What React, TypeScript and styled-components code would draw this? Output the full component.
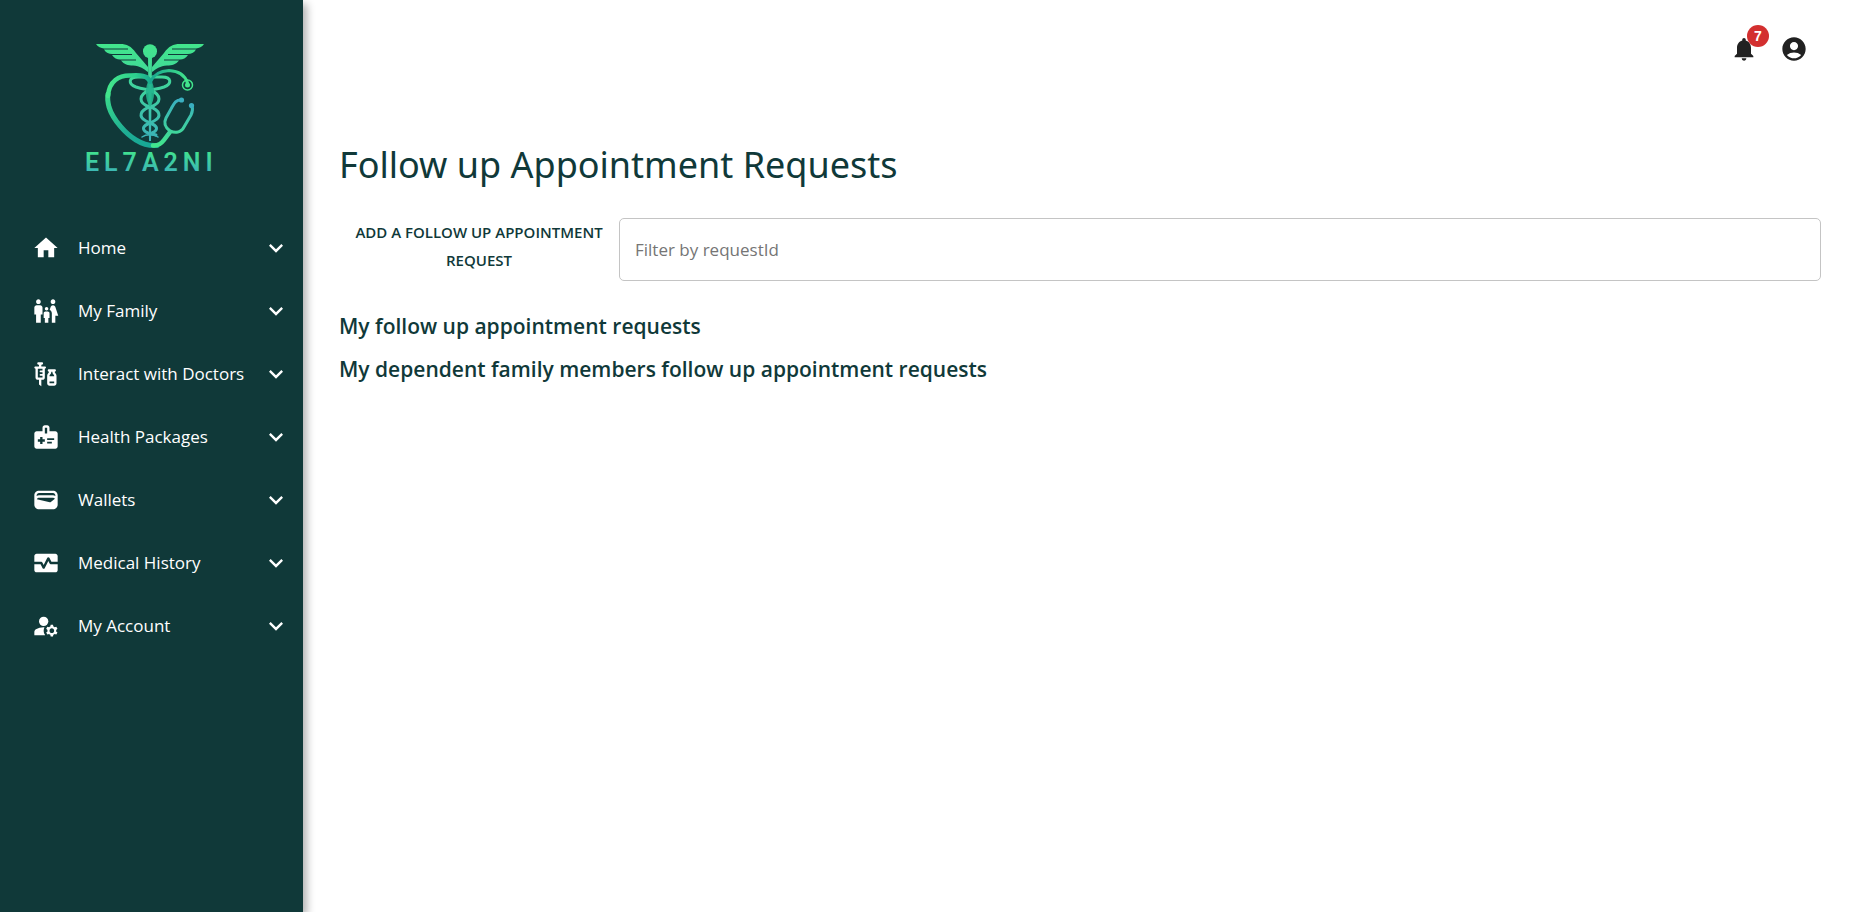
import React from 'react';
import styled, { createGlobalStyle } from 'styled-components';
import {
  MdHome,
  MdFamilyRestroom,
  MdVaccines,
  MdMedicalInformation,
  MdWallet,
  MdMonitorHeart,
  MdManageAccounts,
  MdExpandMore,
  MdNotifications,
  MdAccountCircle,
} from 'react-icons/md';
import type { IconType } from 'react-icons';

const GlobalStyle = createGlobalStyle`
  *, *::before, *::after { box-sizing: border-box; }
  body {
    margin: 0;
    background: #fff;
    color: #103939;
    font-family: "Segoe UI", "Open Sans", "Noto Sans", sans-serif;
  }
`;

const Page = styled.div`
  display: flex;
  min-height: 100vh;
`;

const Sidebar = styled.aside`
  flex: none;
  width: 303px;
  padding-top: 30px;
  background: #103939;
  box-shadow: 4px 4px 8px rgba(0, 0, 0, 0.3);
`;

const LogoLink = styled.a`
  display: flex;
  justify-content: center;
  margin-bottom: 26px;
  padding-right: 4px;
`;

const LogoText = styled.text`
  font-family: Roboto, sans-serif;
  font-size: 25px;
  font-weight: 600;
  letter-spacing: 5px;
`;

const Menu = styled.ul`
  margin: 0;
  padding: 0;
  list-style: none;
`;

const MenuButton = styled.button`
  display: flex;
  align-items: center;
  width: 100%;
  height: 63px;
  padding: 0 13px 0 32px;
  border: 0;
  background: none;
  color: #fff;
  font-family: inherit;
  font-size: 17px;
  text-align: left;
  cursor: pointer;

  svg { flex: none; }
`;

const MenuLabel = styled.span`
  flex: 1;
  margin-left: 18px;
  white-space: nowrap;
`;

const Main = styled.main`
  flex: 1;
  min-width: 0;
  padding: 0 30px 0 36px;
`;

const TopBar = styled.header`
  display: flex;
  justify-content: flex-end;
  gap: 22px;
  height: 100px;
  padding: 35px 13px 0 0;
`;

const IconButton = styled.button`
  position: relative;
  width: 28px;
  height: 28px;
  padding: 0;
  border: 0;
  background: none;
  color: #212121;
  cursor: pointer;

  svg { display: block; }
`;

const Badge = styled.span`
  position: absolute;
  top: -10px;
  right: -11px;
  width: 22px;
  height: 22px;
  border-radius: 50%;
  background: #d32f2f;
  color: #fff;
  font-size: 14px;
  font-weight: 600;
  line-height: 22px;
  text-align: center;
`;

const Title = styled.h1`
  margin: 40px 0 28px;
  font-family: "Segoe UI", "Noto Sans", sans-serif;
  font-size: 36px;
  font-weight: 400;
  line-height: 50px;
`;

const Toolbar = styled.div`
  display: flex;
  align-items: flex-start;
  margin-bottom: 28px;
`;

const AddButton = styled.button`
  flex: none;
  width: 280px;
  padding: 0 8px;
  border: 0;
  background: none;
  color: #103939;
  font-family: inherit;
  font-size: 15px;
  font-weight: 600;
  line-height: 28px;
  text-transform: uppercase;
  cursor: pointer;
`;

const FilterInput = styled.input`
  flex: 1;
  min-width: 0;
  height: 63px;
  padding: 0 15px;
  border: 1px solid #c4c4c4;
  border-radius: 5px;
  background: #fff;
  color: #103939;
  font-family: inherit;
  font-size: 17px;

  &::placeholder { color: #757575; opacity: 1; }
`;

const SectionTitle = styled.h2`
  margin: 0 0 9px;
  font-size: 21px;
  font-weight: 600;
  line-height: 34px;
`;

const menu: { label: string; icon: IconType }[] = [
  { label: 'Home', icon: MdHome },
  { label: 'My Family', icon: MdFamilyRestroom },
  { label: 'Interact with Doctors', icon: MdVaccines },
  { label: 'Health Packages', icon: MdMedicalInformation },
  { label: 'Wallets', icon: MdWallet },
  { label: 'Medical History', icon: MdMonitorHeart },
  { label: 'My Account', icon: MdManageAccounts },
];

function Logo() {
  return (
    <svg width="160" height="160" viewBox="0 0 160 160" fill="none" strokeLinecap="round" role="img" aria-label="El7a2ni">
      <defs>
        <linearGradient id="staff" gradientUnits="userSpaceOnUse" x1="0" y1="14" x2="0" y2="112">
          <stop offset="0" stopColor="#42e58c" />
          <stop offset="0.5" stopColor="#3fd0a0" />
          <stop offset="1" stopColor="#3aafb9" />
        </linearGradient>
        <linearGradient id="heart" gradientUnits="userSpaceOnUse" x1="35" y1="60" x2="80" y2="112">
          <stop offset="0" stopColor="#3ddf8a" />
          <stop offset="0.65" stopColor="#1fae94" />
          <stop offset="1" stopColor="#17a795" />
        </linearGradient>
        <linearGradient id="top" gradientUnits="userSpaceOnUse" x1="40" y1="0" x2="82" y2="0">
          <stop offset="0" stopColor="#42e58c" />
          <stop offset="0.6" stopColor="#2ccf8e" />
          <stop offset="1" stopColor="#17a58e" />
        </linearGradient>
        <linearGradient id="tube" gradientUnits="userSpaceOnUse" x1="80" y1="0" x2="118" y2="0">
          <stop offset="0" stopColor="#17a58e" />
          <stop offset="1" stopColor="#42e58c" />
        </linearGradient>
        <linearGradient id="fork" gradientUnits="userSpaceOnUse" x1="0" y1="70" x2="0" y2="116">
          <stop offset="0" stopColor="#3aafc0" />
          <stop offset="1" stopColor="#42e58c" />
        </linearGradient>
        <linearGradient id="word" gradientUnits="userSpaceOnUse" x1="0" y1="123" x2="0" y2="141">
          <stop offset="0" stopColor="#41df91" />
          <stop offset="1" stopColor="#3cb8b4" />
        </linearGradient>
      </defs>
      <g fill="url(#staff)">
        <circle cx="80" cy="21.300" r="7" />
        <path d="M78 37 C74 32 70 28 66 23 C61 16 57 14 50 14 H26 C28 17 31 18 34 18.500 H58 V19.500 H34 C36 23 39 24 42 24 H62 V25 H42 C44 28 47 29.500 50 29.500 H66 V30.500 H51 C54 34.500 58 35.500 63 35.500 C70 36 74 39 78 42 Z" />
        <path d="M82 37 C86 32 90 28 94 23 C99 16 103 14 110 14 H134 C132 17 129 18 126 18.500 H102 V19.500 H126 C124 23 121 24 118 24 H98 V25 H118 C116 28 113 29.500 110 29.500 H94 V30.500 H109 C106 34.500 102 35.500 97 35.500 C90 36 86 39 82 42 Z" />
        <path d="M78 26 H82 L81 111 H79 Z" />
      </g>
      <g stroke="url(#staff)" strokeWidth="3">
        <path d="M78 47 H68 C58 47 58 54 66 57 C72 59 76 59 80 60 C92 65 92 73 80 77 C70 80 68 87 76 91 L82 94 C89 97 87 101 82 103" />
        <path d="M82 47 H92 C102 47 102 54 94 57 C88 59 84 59 80 60 C68 65 68 73 80 77 C90 80 92 87 84 91 L78 94 C71 97 73 101 78 103 L86 105" />
        <path d="M72 107 C76 104 84 104 88 107" strokeWidth="1.500" />
      </g>
      <path d="M80 48 C74 57 75 70 80 77 C85 70 86 57 80 48 Z" fill="#24b58e" opacity="0.9" />
      <path d="M38 64 C37 69 38 73 39 77 C43 90 56 104 66 110 C74 115 80 116 87 115.500" stroke="url(#heart)" strokeWidth="5" />
      <path d="M38 66 C39 51 49 45 61 45.500 C70 45 78 45 80 52" stroke="url(#top)" strokeWidth="4.500" />
      <path d="M81 51 C84 44 91 41 99 40.500 C108 41 115 45 117.500 53" stroke="url(#tube)" strokeWidth="3" />
      <circle cx="117.500" cy="55" r="5" stroke="#42e58c" strokeWidth="1.500" />
      <circle cx="117.500" cy="55" r="2.500" fill="#42e58c" />
      <g stroke="url(#fork)" strokeWidth="3">
        <path d="M111 70 C105 70 104 74 101 79 L96 88 C93 94 96 98 100 101 C105 103 111 103 114 97 L121 85 C123 81 123 79 122 76" />
        <path d="M100 102 L94 110 C91 114 88 116 83 115.500" strokeWidth="4.500" />
      </g>
      <circle cx="111.500" cy="70" r="2.600" fill="#3aafc0" />
      <circle cx="121.500" cy="75.500" r="2.600" fill="#3aafc0" />
      <LogoText x="15" y="141" fill="url(#word)">EL7A2NI</LogoText>
    </svg>
  );
}

export default function App() {
  return (
    <>
      <GlobalStyle />
      <Page>
        <Sidebar>
          <LogoLink href="#home">
            <Logo />
          </LogoLink>
          <nav>
            <Menu>
              {menu.map(({ label, icon: Icon }) => (
                <li key={label}>
                  <MenuButton type="button" aria-expanded={false}>
                    <Icon size={28} />
                    <MenuLabel>{label}</MenuLabel>
                    <MdExpandMore size={28} />
                  </MenuButton>
                </li>
              ))}
            </Menu>
          </nav>
        </Sidebar>
        <Main>
          <TopBar>
            <IconButton type="button" aria-label="Notifications">
              <MdNotifications size={28} />
              <Badge>7</Badge>
            </IconButton>
            <IconButton type="button" aria-label="Account">
              <MdAccountCircle size={28} />
            </IconButton>
          </TopBar>
          <Title>Follow up Appointment Requests</Title>
          <Toolbar>
            <AddButton type="button">Add a follow up appointment request</AddButton>
            <FilterInput type="text" placeholder="Filter by requestId" aria-label="Filter by requestId" />
          </Toolbar>
          <SectionTitle>My follow up appointment requests</SectionTitle>
          <SectionTitle>My dependent family members follow up appointment requests</SectionTitle>
        </Main>
      </Page>
    </>
  );
}
